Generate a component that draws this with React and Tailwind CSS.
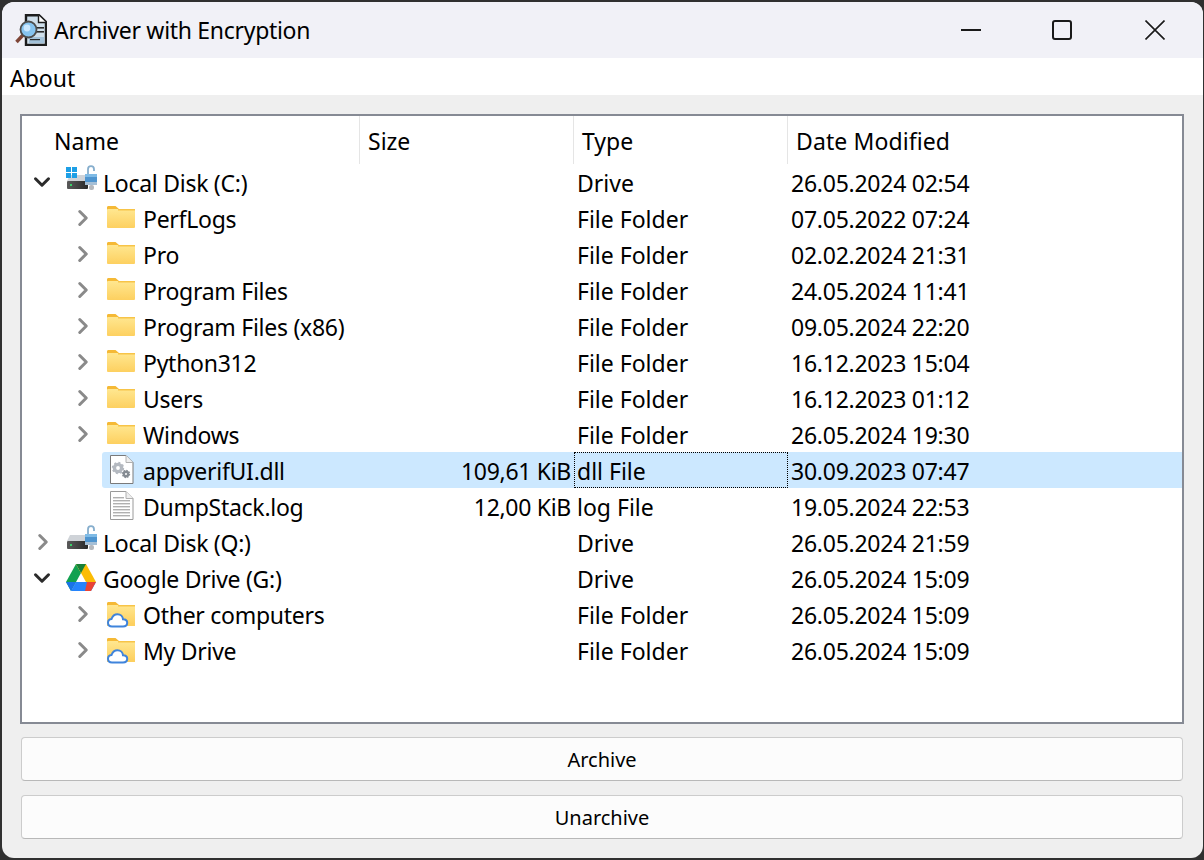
import { ChevronDown, ChevronRight } from "lucide-react";

const FONT = "font-['Noto_Sans','Open_Sans',sans-serif]";

const rows = [
  { depth: 0, open: true, icon: "winDrive", name: "Local Disk (C:)", size: "", type: "Drive", date: "26.05.2024 02:54" },
  { depth: 1, open: false, icon: "folder", name: "PerfLogs", size: "", type: "File Folder", date: "07.05.2022 07:24" },
  { depth: 1, open: false, icon: "folder", name: "Pro", size: "", type: "File Folder", date: "02.02.2024 21:31" },
  { depth: 1, open: false, icon: "folder", name: "Program Files", size: "", type: "File Folder", date: "24.05.2024 11:41" },
  { depth: 1, open: false, icon: "folder", name: "Program Files (x86)", size: "", type: "File Folder", date: "09.05.2024 22:20" },
  { depth: 1, open: false, icon: "folder", name: "Python312", size: "", type: "File Folder", date: "16.12.2023 15:04" },
  { depth: 1, open: false, icon: "folder", name: "Users", size: "", type: "File Folder", date: "16.12.2023 01:12" },
  { depth: 1, open: false, icon: "folder", name: "Windows", size: "", type: "File Folder", date: "26.05.2024 19:30" },
  { depth: 1, icon: "dll", name: "appverifUI.dll", size: "109,61 KiB", type: "dll File", date: "30.09.2023 07:47", selected: true },
  { depth: 1, icon: "log", name: "DumpStack.log", size: "12,00 KiB", type: "log File", date: "19.05.2024 22:53" },
  { depth: 0, open: false, icon: "drive", name: "Local Disk (Q:)", size: "", type: "Drive", date: "26.05.2024 21:59" },
  { depth: 0, open: true, icon: "gdrive", name: "Google Drive (G:)", size: "", type: "Drive", date: "26.05.2024 15:09" },
  { depth: 1, open: false, icon: "cloud", name: "Other computers", size: "", type: "File Folder", date: "26.05.2024 15:09" },
  { depth: 1, open: false, icon: "cloud", name: "My Drive", size: "", type: "File Folder", date: "26.05.2024 15:09" },
];

function Folder() {
  return (
    <>
      <defs>
        <linearGradient id="folderFill" x1="0" y1="0" x2="0" y2="1">
          <stop offset="0" stopColor="#ffe790" />
          <stop offset="1" stopColor="#fdd060" />
        </linearGradient>
      </defs>
      <path d="M1 10V7.5C1 6.7 1.6 6 2.4 6H9.5L13 9H12Z" fill="#f5b936" />
      <rect x="1" y="9" width="28" height="19" rx="1" fill="url(#folderFill)" />
      <rect x="12" y="9" width="17" height="1.5" fill="#f7c448" />
    </>
  );
}

function DriveBody() {
  return (
    <>
      <defs>
        <linearGradient id="driveBar" x1="0" y1="0" x2="1" y2="0">
          <stop offset="0" stopColor="#5a5a5a" />
          <stop offset="1" stopColor="#2a2a2a" />
        </linearGradient>
      </defs>
      <path d="M4 11H20L22 17H1Z" fill="#cfd3d8" />
      <rect x="1" y="17" width="21" height="8" rx="1" fill="url(#driveBar)" />
      <rect x="4" y="20" width="2" height="2" fill="#3ad06a" />
      <path d="M22 10V5.2C22 3.4 23.2 2.2 25 2.2S28 3.4 28 5.2V7" fill="none" stroke="#86aecd" strokeWidth="1.8" />
      <rect x="19" y="10" width="12" height="11" rx="1" fill="#4f95cf" />
      <rect x="19" y="10" width="12" height="3" fill="#7fbbe6" />
      <rect x="19" y="18" width="12" height="3" fill="#a5bfd6" />
      <rect x="23" y="21" width="5" height="5" rx="2" fill="#b4b8bd" />
    </>
  );
}

// every icon is drawn in a box the height of a row, so the coordinates are row-relative
function FileIcon({ kind }) {
  return (
    <svg width="32" height="36" viewBox="0 0 32 36" className="shrink-0">
      {kind === "folder" && <Folder />}
      {kind === "cloud" && (
        <>
          <Folder />
          <rect x="1" y="27" width="28" height="3" fill="#fdd060" />
          <path
            d="M6 30.5C3.5 30.5 2 28.8 2 26.8S3.5 23.2 5.5 23C6.5 20.2 9 18.2 11.5 18.2C14.6 18.2 16.8 20.6 17 23.2C19.6 23.2 21.2 24.8 21.2 26.8S19.6 30.5 17 30.5Z"
            fill="#fff"
            stroke="#3f84dc"
            strokeWidth="2"
          />
        </>
      )}
      {kind === "winDrive" && (
        <>
          <DriveBody />
          <rect x="0" y="3" width="5" height="5" fill="#1d9fe6" />
          <rect x="6" y="3" width="5" height="5" fill="#1d9fe6" />
          <rect x="0" y="9" width="5" height="5" fill="#1d9fe6" />
          <rect x="6" y="9" width="5" height="5" fill="#1d9fe6" />
        </>
      )}
      {kind === "drive" && <DriveBody />}
      {kind === "gdrive" && (
        <>
          <path d="M10 4L0 22L5 31L15 13Z" fill="#12a150" />
          <path d="M10 4H20L30 22H20Z" fill="#fbbc04" />
          <path d="M10 22H30L25 31H5Z" fill="#2684fc" />
          <path d="M21 22H30L25 31H19Z" fill="#ea4335" />
          <path d="M0 22H10L5 31Z" fill="#1a73e8" />
          <path d="M10 4H20L15 13Z" fill="#188038" />
        </>
      )}
      {(kind === "dll" || kind === "log") && (
        <>
          <path d="M4.5 3.5H20L27 10.5V31.5H4.5Z" fill="#fff" stroke={kind === "dll" ? "#7a7a7a" : "#9a9a9a"} />
          <path d="M20 3.5V10.5H27" fill="#eee" stroke="#b0b0b0" />
        </>
      )}
      {kind === "log" &&
        [9, 12, 15, 18, 21, 24, 27].map((y) => (
          <rect key={y} x="7" y={y} width={y === 9 ? 11 : 17} height="1.4" fill="#b0b0b0" />
        ))}
      {kind === "dll" && (
        <>
          <circle cx="12" cy="16" r="3.6" fill="#fff" stroke="#b4b9c0" strokeWidth="3.4" />
          <circle cx="12" cy="16" r="5.4" fill="none" stroke="#b4b9c0" strokeWidth="1.6" strokeDasharray="2 2.2" />
          <circle cx="20" cy="22" r="2.2" fill="#fff" stroke="#868c93" strokeWidth="2.4" />
          <circle cx="20" cy="22" r="3.6" fill="none" stroke="#868c93" strokeWidth="1.2" strokeDasharray="1.5 1.3" />
        </>
      )}
    </svg>
  );
}

function AppIcon() {
  return (
    <svg width="32" height="32" viewBox="0 0 32 32" className="shrink-0">
      <path d="M11 1.2H24L31 8V31H11Z" fill="#cfdfeb" stroke="#1d1d1d" strokeWidth="2.4" />
      <path d="M23.5 1.2V8.5H31" fill="#fff" stroke="#1d1d1d" strokeWidth="1.4" />
      <rect x="21" y="13" width="8" height="1.6" fill="#2c2c2c" />
      <rect x="21" y="17" width="8" height="1.6" fill="#2c2c2c" />
      <rect x="14" y="23" width="15" height="6" fill="#a3c2da" />
      <rect x="15" y="25" width="10" height="1.2" fill="#2c2c2c" />
      <path d="M8 21L1.5 28" stroke="#7e4536" strokeWidth="3.4" />
      <circle cx="13.5" cy="15.5" r="8" fill="#86c4f0" stroke="#4d4d4d" strokeWidth="1.8" />
      <circle cx="12" cy="14" r="3.4" fill="#cbe8ff" />
    </svg>
  );
}

function Row({ row }) {
  const Chevron = row.open ? ChevronDown : ChevronRight;
  const sel = row.selected ? "bg-[#cce8ff]" : "";
  return (
    <div className="grid grid-cols-[338px_214px_214px_1fr] h-[36px] items-stretch">
      <div className="flex items-stretch">
        {row.depth === 1 && <div className="w-[40px] shrink-0" />}
        <div className="w-[40px] shrink-0 flex items-center justify-center">
          {row.open !== undefined && (
            <Chevron
              size={26}
              strokeWidth={2.8}
              className={row.open ? "text-[#2b2b2b]" : "ml-[2px] text-[#8a8a8a]"}
            />
          )}
        </div>
        <div className={`flex-1 flex items-center pl-[4px] rounded-l-[3px] ${sel}`}>
          <FileIcon kind={row.icon} />
          <span className="ml-[5px] pt-[3px] tracking-[-0.27px] whitespace-nowrap">{row.name}</span>
        </div>
      </div>
      <div className={`flex items-center justify-end pr-[3px] pt-[3px] tracking-[-0.3px] ${sel}`}>{row.size}</div>
      <div
        className={`flex items-center pl-[3px] pt-[3px] ${
          row.selected ? "bg-[#cce8ff] outline-1 -outline-offset-1 outline-dotted outline-black" : ""
        }`}
      >
        {row.type}
      </div>
      <div className={`flex items-center pl-[3px] pt-[3px] tracking-[-0.25px] ${sel}`}>{row.date}</div>
    </div>
  );
}

export default function App() {
  return (
    <div className={`h-[860px] w-[1204px] bg-[#303030] pt-[2px] pl-[2px] pr-[1px] pb-[2px] overflow-hidden ${FONT}`}>
      <div className="h-full flex flex-col rounded-[12px] overflow-hidden bg-[#efefef] text-black text-[23px] leading-none">
        <div className="h-[56px] shrink-0 bg-[#f1f1f7] flex items-center pl-[13px]">
          <AppIcon />
          <span className="ml-[7px] flex-1 tracking-[-0.3px]">Archiver with Encryption</span>
          <div className="flex h-full items-center pr-[2px]">
            <div className="w-[88px] flex justify-center">
              <div className="w-[20px] h-[2px] bg-[#1a1a1a]" />
            </div>
            <div className="w-[94px] flex justify-center">
              <div className="w-[20px] h-[20px] border-2 border-[#1a1a1a] rounded-[3px]" />
            </div>
            <div className="w-[92px] flex justify-center">
              <svg width="20" height="20" viewBox="0 0 20 20">
                <path d="M0.5 0.5L19.5 19.5M19.5 0.5L0.5 19.5" stroke="#1a1a1a" strokeWidth="1.6" />
              </svg>
            </div>
          </div>
        </div>

        <div className="h-[37px] shrink-0 bg-white flex items-center pl-[8px] pt-[3px]">About</div>

        <div className="flex-1 flex flex-col pl-[18px] pr-[19px] pt-[19px] pb-[19px]">
          <div className="h-[610px] shrink-0 border-2 border-[#868a94] bg-white flex flex-col">
            <div className="grid grid-cols-[338px_214px_214px_1fr] h-[48px] shrink-0 items-stretch">
              <div className="flex items-center pl-[32px] pt-[3px] border-r border-[#e5e5e5]">Name</div>
              <div className="flex items-center pl-[8px] pt-[3px] border-r border-[#e5e5e5]">Size</div>
              <div className="flex items-center pl-[8px] pt-[3px] border-r border-[#e5e5e5]">Type</div>
              <div className="flex items-center pl-[8px] pt-[3px] tracking-[0.1px]">Date Modified</div>
            </div>
            {rows.map((row) => (
              <Row key={row.name} row={row} />
            ))}
          </div>

          <div className="mt-[13px] flex flex-col gap-[14px] pl-[1px] pr-[1px] text-[20px]">
            <button className="h-[44px] bg-[#fcfcfc] border border-[#cccccc] border-b-[#b8b8b8] rounded-[4px] pt-[2px]">
              Archive
            </button>
            <button className="h-[44px] bg-[#fcfcfc] border border-[#cccccc] border-b-[#b8b8b8] rounded-[4px] pt-[2px]">
              Unarchive
            </button>
          </div>
        </div>
      </div>
    </div>
  );
}
